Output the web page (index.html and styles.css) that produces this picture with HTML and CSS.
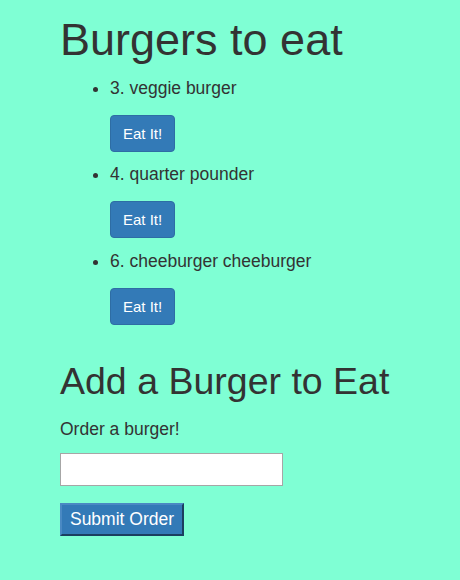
FILE: index.html
```html
<!DOCTYPE html>
<html lang="en">
<head>
<meta charset="utf-8">
<title>Burgers</title>
<link rel="stylesheet" href="styles.css">
</head>
<body>
<div class="container">
  <h1 class="title">Burgers to eat</h1>
  <ul class="burger-list">
    <li class="burger">
      <div class="burger-name">3. veggie burger</div>
      <button class="btn-eat" type="button">Eat It!</button>
    </li>
    <li class="burger">
      <div class="burger-name">4. quarter pounder</div>
      <button class="btn-eat" type="button">Eat It!</button>
    </li>
    <li class="burger">
      <div class="burger-name">6. cheeburger cheeburger</div>
      <button class="btn-eat" type="button">Eat It!</button>
    </li>
  </ul>
  <h2 class="subtitle">Add a Burger to Eat</h2>
  <form class="order-form">
    <label class="order-label" for="burger">Order a burger!</label>
    <input class="order-input" id="burger" type="text">
    <button class="btn-submit" type="submit">Submit Order</button>
  </form>
</div>
</body>
</html>
```
FILE: styles.css
```css
html, body {
  margin: 0;
  padding: 0;
}

body {
  background: #7fffd4;
  color: #333;
  font-family: "Liberation Sans", Arial, Helvetica, sans-serif;
  font-size: 17.5px;
  line-height: 25px;
}

.container {
  padding-left: 60px;
}

.title {
  font-size: 45px;
  line-height: 49.5px;
  font-weight: 400;
  margin: 15px 0 0;
}

.burger-list {
  margin: 11px 0 0;
  padding-left: 50px;
}

.burger + .burger {
  margin-top: 10.7px;
}

.burger-name {
  line-height: 25px;
}

.btn-eat {
  display: block;
  margin-top: 14px;
  height: 37px;
  box-sizing: border-box;
  padding: 0 12px;
  background: #337ab7;
  border: 1px solid #2e6da4;
  border-radius: 4px;
  color: #fff;
  font-family: "Liberation Sans", Arial, sans-serif;
  font-size: 15px;
  line-height: 35px;
  cursor: pointer;
}

.subtitle {
  font-size: 37.5px;
  line-height: 41.25px;
  font-weight: 400;
  margin: 36.5px 0 0;
}

.order-form {
  margin: 0;
}

.order-label {
  display: block;
  margin-top: 14px;
  line-height: 25px;
}

.order-input {
  display: block;
  margin-top: 11.5px;
  width: 223px;
  height: 33px;
  box-sizing: border-box;
  border: 1px solid #a6a6a6;
  background: #fff;
  padding: 2px 4px;
  font-family: "Liberation Sans", Arial, sans-serif;
  font-size: 17px;
}

.btn-submit {
  display: block;
  margin-top: 17px;
  width: 124px;
  height: 33px;
  box-sizing: border-box;
  padding: 0;
  background: #337ab7;
  color: #fff;
  border-style: solid;
  border-width: 2px;
  border-color: #4a89c3 #1b3f60 #1b3f60 #4a89c3;
  font-family: "Liberation Sans", Arial, sans-serif;
  font-size: 17.5px;
  line-height: 29px;
  text-align: center;
}
```
